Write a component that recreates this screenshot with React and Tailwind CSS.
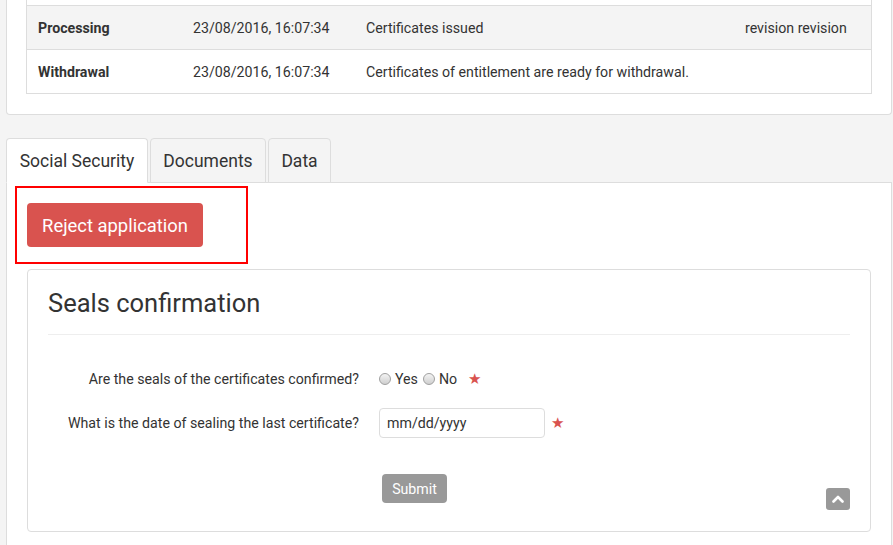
import React from "react";

function Radio() {
  return (
    <span className="inline-block w-[12px] h-[12px] rounded-full border border-[#a0a0a0] bg-gradient-to-b from-[#f4f4f4] to-[#cfcfcf] shrink-0" />
  );
}

export default function App() {
  const rows = [
    { a: "Processing", b: "23/08/2016, 16:07:34", c: "Certificates issued", d: "revision revision", bg: "bg-[#f4f4f4]" },
    { a: "Withdrawal", b: "23/08/2016, 16:07:34", c: "Certificates of entitlement are ready for withdrawal.", d: "", bg: "bg-white" },
  ];
  return (
    <div className="h-[545px] overflow-hidden bg-[#f4f4f4] font-[Roboto,sans-serif] text-[#333]">
      <div className="ml-[6px] w-[886px]">
        {/* Top card with table */}
        <div className="bg-white border-x border-b border-[#ddd] rounded-b-[4px] px-[19px] pb-[20px]">
          <div className="border-x border-b border-[#ddd]">
            <div className="h-[5px]" />
            {rows.map((r, i) => (
              <div
                key={i}
                className={`grid grid-cols-[155px_173px_379px_1fr] h-[44px] pt-[2px] items-center border-t border-[#ddd] text-[14.2px] ${r.bg}`}
              >
                <div className="px-[11px] font-bold">{r.a}</div>
                <div className="px-[11px]">{r.b}</div>
                <div className="px-[11px] whitespace-nowrap">{r.c}</div>
                <div className="px-[11px] whitespace-nowrap">{r.d}</div>
              </div>
            ))}
          </div>
        </div>

        {/* Tabs */}
        <div className="mt-[23px] flex gap-[2px] border-b border-[#ddd] text-[17.5px]">
          <div className="relative -mb-px h-[45px] w-[142px] pt-[2px] flex items-center justify-center bg-white border border-[#ddd] border-b-white rounded-t-[4px]">
            Social Security
          </div>
          <div className="relative -mb-px h-[45px] w-[116px] pt-[2px] flex items-center justify-center bg-[#f4f4f4] border border-[#ddd] rounded-t-[4px]">
            Documents
          </div>
          <div className="relative -mb-px h-[45px] w-[63px] pt-[2px] flex items-center justify-center bg-[#f4f4f4] border border-[#ddd] rounded-t-[4px]">
            Data
          </div>
        </div>

        {/* Tab panel */}
        <div className="relative bg-white border-x border-[#ddd] p-[20px] pb-[40px]">
          <div className="absolute left-[8px] top-[3px] w-[233px] h-[78px] border-2 border-[#ff0000] pointer-events-none" />
          <button className="h-[44px] w-[176px] pt-[2px] rounded-[4px] bg-[#d9534f] text-white text-[18.4px] flex items-center justify-center">
            Reject application
          </button>

          <div className="relative mt-[22px] border border-[#ddd] rounded-[4px] px-[20px] pt-[19px] pb-[28px]">
            <div className="text-[25.5px] leading-[29px] pb-[16px] border-b border-[#eee]">
              Seals confirmation
            </div>

            <div className="mt-[28px] flex items-center h-[30px] pt-[3px] text-[14.2px]">
              <div className="w-[311px] text-right">Are the seals of the certificates confirmed?</div>
              <div className="ml-[20px] flex items-center">
                <Radio />
                <span className="ml-[4px]">Yes</span>
                <span className="ml-[5px] flex"><Radio /></span>
                <span className="ml-[4px]">No</span>
                <span className="ml-[11px] text-[#d9534f] text-[15px] leading-none">★</span>
              </div>
            </div>

            <div className="mt-[15px] flex items-center h-[30px] text-[14.2px]">
              <div className="w-[311px] text-right pt-[1px]">What is the date of sealing the last certificate?</div>
              <div className="ml-[20px] flex items-center">
                <div className="w-[166px] h-[30px] border border-[#ddd] rounded-[4px] flex items-center pl-[7px] pt-[1px]">
                  mm/dd/yyyy
                </div>
                <span className="ml-[6px] text-[#d9534f] text-[15px] leading-none">★</span>
              </div>
            </div>

            <div className="mt-[36px] pl-[334px]">
              <button className="h-[29px] w-[65px] pt-[3px] rounded-[4px] bg-[#999] text-white text-[14.2px] flex items-center justify-center">
                Submit
              </button>
            </div>

            <div className="absolute right-[20px] bottom-[21px] w-[24px] h-[22px] rounded-[3px] bg-[#999] flex items-center justify-center">
              <svg width="12" height="8" viewBox="0 0 12 8">
                <path d="M1.5 6.5 L6 2 L10.5 6.5" fill="none" stroke="white" strokeWidth="2.6" strokeLinecap="round" strokeLinejoin="round" />
              </svg>
            </div>
          </div>
        </div>
      </div>
    </div>
  );
}
